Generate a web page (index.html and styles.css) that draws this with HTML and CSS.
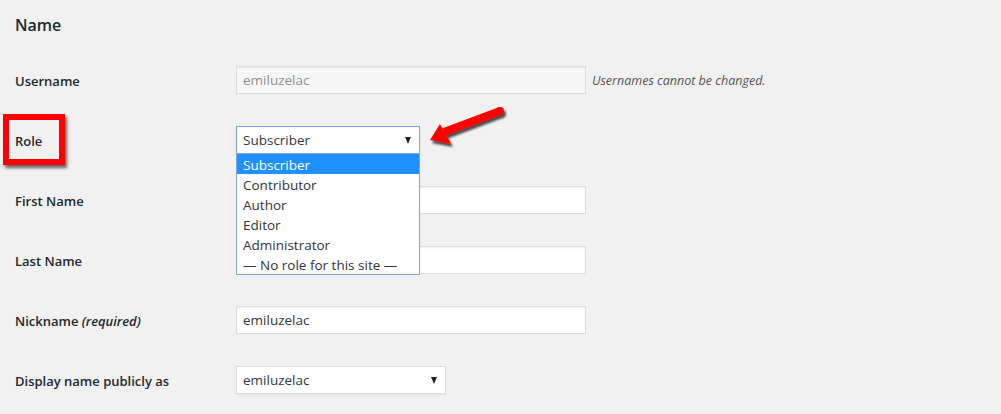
FILE: index.html
```html
<!DOCTYPE html>
<html>
<head>
<meta charset="utf-8">
<link rel="stylesheet" href="styles.css">
</head>
<body>
<div class="page">
  <h2 class="title">Name</h2>
  <div class="form">
    <div class="row">
      <div class="label">Username</div>
      <div class="field">
        <div class="input disabled">emiluzelac</div>
        <span class="desc">Usernames cannot be changed.</span>
      </div>
    </div>
    <div class="row">
      <div class="label role-label">Role<span class="highlight-box"></span></div>
      <div class="field">
        <div class="select-wrap">
          <div class="select focused"><span>Subscriber</span><span class="caret"></span></div>
          <ul class="options">
            <li class="selected">Subscriber</li>
            <li>Contributor</li>
            <li>Author</li>
            <li>Editor</li>
            <li>Administrator</li>
            <li>— No role for this site —</li>
          </ul>
          <svg class="pointer" width="90" height="50" viewBox="0 0 90 50">
            <defs>
              <filter id="sh" x="-20%" y="-30%" width="150%" height="170%">
                <feGaussianBlur in="SourceAlpha" stdDeviation="1.2"/>
                <feOffset dx="2" dy="3" result="b"/>
                <feComponentTransfer><feFuncA type="linear" slope="0.7"/></feComponentTransfer>
                <feMerge><feMergeNode/><feMergeNode in="SourceGraphic"/></feMerge>
              </filter>
            </defs>
            <g filter="url(#sh)" fill="#f00" stroke="none">
              <path d="M22.6 28.3 L78.6 7.3 L81.4 14.7 L25.4 35.7 Z"/>
              <circle cx="80" cy="11" r="4"/>
              <path d="M10 40 L20 24 L24 31 L31 44 Z"/>
            </g>
          </svg>
        </div>
      </div>
    </div>
    <div class="row">
      <div class="label">First Name</div>
      <div class="field"><div class="input"></div></div>
    </div>
    <div class="row">
      <div class="label">Last Name</div>
      <div class="field"><div class="input"></div></div>
    </div>
    <div class="row">
      <div class="label">Nickname <span class="req">(required)</span></div>
      <div class="field"><div class="input">emiluzelac</div></div>
    </div>
    <div class="row">
      <div class="label">Display name publicly as</div>
      <div class="field"><div class="select short"><span>emiluzelac</span><span class="caret"></span></div></div>
    </div>
  </div>
</div>
</body>
</html>
```
FILE: styles.css
```css
* { box-sizing: border-box; }
html, body { margin: 0; padding: 0; }
body {
  background: #f1f1f1;
  color: #23282d;
  font-family: "Open Sans", "Noto Sans", sans-serif;
  font-size: 13px;
  width: 1001px;
  height: 414px;
  overflow: hidden;
}
.page { padding-left: 15px; }
.title {
  margin: 0;
  height: 50px;
  display: flex;
  align-items: center;
  font-size: 16px;
  font-weight: 600;
}
.row {
  height: 60px;
  display: flex;
  align-items: center;
}
.label {
  width: 221px;
  font-weight: 600;
  font-size: 13px;
  position: relative;
  padding-top: 1px;
}
.req { font-style: italic; font-weight: 600; }
.field { display: flex; align-items: center; }
.input {
  width: 350px;
  height: 28px;
  background: #fff;
  border: 1px solid #ddd;
  box-shadow: inset 0 1px 2px rgba(0,0,0,.07);
  padding: 0 6px;
  line-height: 26px;
  color: #32373c;
  font-size: 13.5px;
}
.input.disabled { background: #f7f7f7; color: #8f8f8f; }
.desc {
  margin-left: 6px;
  font-style: italic;
  font-size: 12.5px;
  color: #555;
}
.select-wrap { position: relative; }
.select {
  width: 184px;
  height: 28px;
  background: #fff;
  border: 1px solid #ddd;
  box-shadow: 0 1px 2px rgba(0,0,0,.07);
  padding: 0 7px 0 6px;
  display: flex;
  align-items: center;
  justify-content: space-between;
  color: #32373c;
  font-size: 13.5px;
}
.select.focused { border-color: #7aa7e0; }
.select.short { width: 210px; }
.caret {
  width: 0; height: 0;
  border-left: 3.5px solid transparent;
  border-right: 3.5px solid transparent;
  border-top: 7px solid #222;
  margin-right: 1px;
}
.options {
  position: absolute;
  left: 0;
  top: 27px;
  width: 184px;
  margin: 0;
  padding: 0;
  list-style: none;
  background: #fff;
  border: 1px solid #7aa7e0;
  z-index: 2;
  font-size: 13.5px;
}
.options li {
  height: 20px;
  line-height: 22px;
  padding-left: 6px;
  color: #333;
}
.options li.selected { background: #1e90ff; color: #fff; }
.highlight-box {
  position: absolute;
  left: -12px;
  top: -17px;
  width: 62px;
  height: 51px;
  border: 6px solid #f00;
  box-shadow: 2px 3px 3px rgba(0,0,0,.6);
}
.pointer {
  position: absolute;
  left: 184px;
  top: -26px;
}
```
